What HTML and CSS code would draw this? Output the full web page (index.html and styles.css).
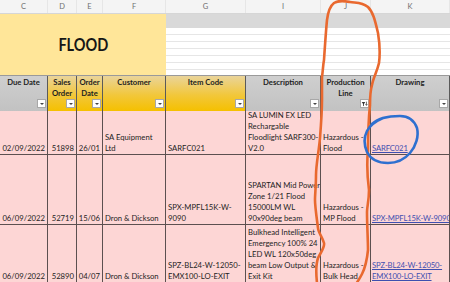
FILE: index.html
```html
<!DOCTYPE html>
<html>
<head>
<meta charset="utf-8">
<link rel="stylesheet" href="styles.css">
</head>
<body>
<div class="sheet">
  <div class="row letters">
    <div>C</div><div>D</div><div>E</div><div>F</div><div>G</div><div>I</div><div>J</div><div>K</div>
  </div>
  <div class="top">
    <div class="title"><span>FLOOD</span></div>
    <div class="blank"></div>
  </div>
  <div class="row hdr">
    <div class="h gray"><span>Due Date</span><i class="fb"></i></div>
    <div class="h gold"><span>Sales<br>Order</span><i class="fb"></i></div>
    <div class="h gold"><span>Order<br>Date</span><i class="fb"></i></div>
    <div class="h gold"><span>Customer</span><i class="fb"></i></div>
    <div class="h gold"><span>Item Code</span><i class="fb"></i></div>
    <div class="h gray"><span>Description</span><i class="fb"></i></div>
    <div class="h gray"><span>Production<br>Line</span><i class="fb filt"><svg width="9" height="8" viewBox="0 0 9 8"><path d="M1 1.5h4.5L3.8 4v3L2.7 6.2V4z" fill="#333"/><path d="M7 1v4.5M5.8 4.3L7 5.8 8.2 4.3" stroke="#333" stroke-width="0.9" fill="none"/></svg></i></div>
    <div class="h gray"><span>Drawing</span><i class="fb"></i></div>
  </div>
  <div class="row data r1">
    <div class="c num">02/09/2022</div>
    <div class="c num">51898</div>
    <div class="c num">26/01</div>
    <div class="c">SA Equipment<br>Ltd</div>
    <div class="c">SARFC021</div>
    <div class="c">SA LUMIN EX LED<br>Rechargable<br>Floodlight SARF300-<br>V2.0</div>
    <div class="c">Hazardous -<br>Flood</div>
    <div class="c link"><a>SARFC021</a></div>
  </div>
  <div class="row data r2">
    <div class="c num">06/09/2022</div>
    <div class="c num">52719</div>
    <div class="c num">15/06</div>
    <div class="c">Dron &amp; Dickson</div>
    <div class="c">SPX-MPFL15K-W-<br>9090</div>
    <div class="c">SPARTAN Mid Power<br>Zone 1/21 Flood<br>15000LM WL<br>90x90deg beam</div>
    <div class="c">Hazardous -<br>MP Flood</div>
    <div class="c link"><a>SPX-MPFL15K-W-9090</a></div>
  </div>
  <div class="row data r3">
    <div class="c num">06/09/2022</div>
    <div class="c num">52890</div>
    <div class="c num">04/07</div>
    <div class="c">Dron &amp; Dickson</div>
    <div class="c">SPZ-BL24-W-12050-<br>EMX100-LO-EXIT</div>
    <div class="c">Bulkhead Intelligent<br>Emergency 100% 24<br>LED WL 120x50deg<br>beam Low Output &amp;<br>Exit Kit</div>
    <div class="c">Hazardous -<br>Bulk Head</div>
    <div class="c link"><a>SPZ-BL24-W-12050-<br>EMX100-LO-EXIT</a></div>
  </div>
  <svg class="marks" width="450" height="282" viewBox="0 0 450 282">
    <path class="orange" d="M317 283 C316 274 316 264 318 258 C321 252 325 247 324 243 C322 236 318 232 318 228 C317 220 315 207 315 200 C315 194 316 186 316 175 C316 165 319 150 320 138 C321 125 322 110 322 100 C322 90 322 82 322 77 C323 70 323 65 324 60 C325 45 326 30 327 20 C328 12 330 6 334 3 C339 0 344 1 350 2 C356 3 362 2 368 7 C373 12 375 20 378 33 C380 45 380 55 379 63 C377 72 373 78 372 85 C370 92 370 97 370 105 C369 115 368 125 368 150 C367 160 367 175 369 190 C369 200 367 207 367 212 C367 225 368 240 368 250 C367 260 365 268 362 274 C360 278 358 281 356 284"/>
    <path class="blue" d="M372 124 C378 118 388 116 400 116 C408 116 414 120 417 128 C419 136 416 146 410 153 C404 160 396 163 388 163 C379 163 371 160 367 152 C364 145 364 137 367 131 C370 125 376 121 383 118"/>
  </svg>
</div>
</body>
</html>
```
FILE: styles.css
```css
* { box-sizing: border-box; margin: 0; padding: 0; }
html, body { width: 450px; height: 282px; overflow: hidden; background: #fff; }
body { font-family: Lato, "Liberation Sans", sans-serif; font-size: 7.7px; color: #1e1e1e; }
.sheet { position: relative; width: 450px; height: 282px; overflow: hidden; }
.row { display: grid; grid-template-columns: 48px 29px 26px 63px 80px 75px 50px 79px; }

.letters { height: 14px; background: #f4f4f4; border-bottom: 1px solid #d6d6d6; color: #707070; font-size: 7.5px; }
.letters div { display: flex; align-items: center; justify-content: center; border-right: 1px solid #e6e6e6; }

.top { display: flex; height: 61px; }
.title { width: 166px; background: #ffe699; display: flex; align-items: center; justify-content: center; }
.title span { font-weight: bold; font-size: 16.5px; transform: scaleX(0.88); color: #161616; }
.blank { flex: 1; border-top: 14px solid #d9d9d9; background: repeating-linear-gradient(to bottom, #fff 0, #fff 6px, #e6e6e6 6px, #e6e6e6 7px); }

.hdr { height: 35px; border-bottom: 1px solid #4a4a4a; border-top: 1px solid #9a9a9a; }
.h { display: flex; flex-direction: column; align-items: center; justify-content: space-between; font-weight: bold; line-height: 11px; padding: 1px 1px 3px; border-right: 1px solid #5a5a5a; text-align: center; }
.gray { background: linear-gradient(#cfcfcf, #c2c2c2); }
.gold { background: linear-gradient(#ead49a, #f2c73a 55%, #f5c000); }
.fb { align-self: flex-end; width: 9px; height: 9px; background: #fff; border: 1px solid #a8a8a8; display: flex; align-items: center; justify-content: center; }
.fb::after { content: ""; border-left: 2px solid transparent; border-right: 2px solid transparent; border-top: 2px solid #444; }
.filt::after { display: none; }
.filt svg { display: block; }

.data { background: #fdd6d5; border-bottom: 1px solid #5c5050; }
.r1 { height: 45px; }
.r2 { height: 70px; }
.r3 { height: 58px; }
.c { display: flex; flex-direction: column; justify-content: flex-end; white-space: nowrap; overflow: hidden; line-height: 11px; padding: 0 1px 0 2px; border-right: 1px solid #5c5050; }
.num { align-items: flex-end; padding-right: 2px; }
.link { padding-left: 1px; padding-right: 0; }
a { color: #3f4fb0; text-decoration: underline; letter-spacing: -0.15px; }

.marks { position: absolute; left: 0; top: 0; pointer-events: none; }
.marks path { fill: none; stroke-width: 2.6; stroke-linecap: round; stroke-linejoin: round; }
.orange { stroke: #e9692f; }
.blue { stroke: #2f70d0; }
```
